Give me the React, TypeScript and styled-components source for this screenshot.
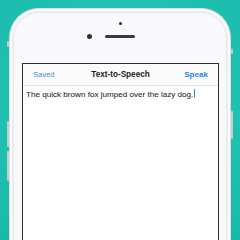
import React from "react";
import styled, { createGlobalStyle } from "styled-components";

const Global = createGlobalStyle`
  html, body { margin: 0; padding: 0; }
  body {
    width: 240px;
    height: 240px;
    overflow: hidden;
    background: radial-gradient(circle at 50% 45%, #27c9bb 0%, #1fc2b3 60%, #19b8aa 100%);
    font-family: "Liberation Sans", Arial, sans-serif;
  }
`;

const Stage = styled.div`
  width: 240px;
  height: 240px;
  padding: 8px 9px 0 9px;
  box-sizing: border-box;
  overflow: hidden;
`;

const Phone = styled.div`
  position: relative;
  width: 222px;
  height: 260px;
  box-sizing: border-box;
  background: #f9f9fb;
  border: 1px solid #dcdde0;
  border-bottom: none;
  border-radius: 30px 30px 0 0;
  box-shadow: inset 0 0 0 2px #ffffff, inset 0 0 0 4px #ececef, inset 0 0 0 5px #f7f7f9;
  display: flex;
  flex-direction: column;
`;

const SideKey = styled.div<{ $side: "left" | "right"; $top: number; $h: number }>`
  position: absolute;
  ${(p) => (p.$side === "left" ? "left: -3px;" : "right: -3px;")}
  top: ${(p) => p.$top}px;
  width: 2px;
  height: ${(p) => p.$h}px;
  background: #c9cacd;
  border-radius: 1px;
`;

const TopArea = styled.div`
  height: 54px;
  display: flex;
  flex-direction: column;
  align-items: center;
`;

const Sensor = styled.div`
  width: 3px;
  height: 3px;
  margin-top: 13px;
  border-radius: 50%;
  background: #2a2c33;
`;

const EarRow = styled.div`
  margin-top: 9px;
  display: flex;
  align-items: center;
  gap: 13px;
`;

const Camera = styled.div`
  width: 5px;
  height: 5px;
  border-radius: 50%;
  background: #2b2e3c;
`;

const Speaker = styled.div`
  width: 30px;
  height: 3px;
  border-radius: 2px;
  background: #3a3b40;
`;

const Spacer = styled.div`
  width: 5px;
`;

const Screen = styled.div`
  flex: 1;
  margin: 0 11px 0 12px;
  border: 1px solid #2e2e30;
  border-bottom: none;
  background: #ffffff;
  display: flex;
  flex-direction: column;
`;

const NavBar = styled.div`
  height: 21px;
  display: grid;
  grid-template-columns: 1fr auto 1fr;
  align-items: center;
  padding: 0 10px;
  background: #fbfbfb;
  border-bottom: 1px solid #e3e3e5;
`;

const NavButton = styled.span<{ $align: "left" | "right"; $bold?: boolean }>`
  justify-self: ${(p) => (p.$align === "left" ? "start" : "end")};
  font-size: ${(p) => (p.$bold ? "8.1px" : "7.6px")};
  font-weight: ${(p) => (p.$bold ? 700 : 400)};
  color: ${(p) => (p.$bold ? "#2f86e0" : "#3f8de2")};
`;

const Title = styled.span`
  font-size: 8.2px;
  font-weight: 700;
  color: #1c1c1e;
`;

const Body = styled.div`
  padding: 3px 3px;
  font-size: 8.1px;
  line-height: 12px;
  color: #1d1d1f;
  -webkit-text-stroke: 0.06px #1d1d1f;
`;

const Caret = styled.span`
  display: inline-block;
  width: 1px;
  height: 9px;
  margin-left: 1px;
  vertical-align: -1px;
  background: #3a86e0;
`;

export default function App() {
  return (
    <>
      <Global />
      <Stage>
        <Phone>
          <SideKey $side="left" $top={32} $h={6} />
          <SideKey $side="left" $top={112} $h={26} />
          <SideKey $side="left" $top={142} $h={30} />
          <SideKey $side="right" $top={40} $h={5} />
          <SideKey $side="right" $top={102} $h={28} />
          <TopArea>
            <Sensor />
            <EarRow>
              <Camera />
              <Speaker />
              <Spacer />
            </EarRow>
          </TopArea>
          <Screen>
            <NavBar>
              <NavButton $align="left">Saved</NavButton>
              <Title>Text-to-Speech</Title>
              <NavButton $align="right" $bold>Speak</NavButton>
            </NavBar>
            <Body>
              The quick brown fox jumped over the lazy dog.
              <Caret />
            </Body>
          </Screen>
        </Phone>
      </Stage>
    </>
  );
}
